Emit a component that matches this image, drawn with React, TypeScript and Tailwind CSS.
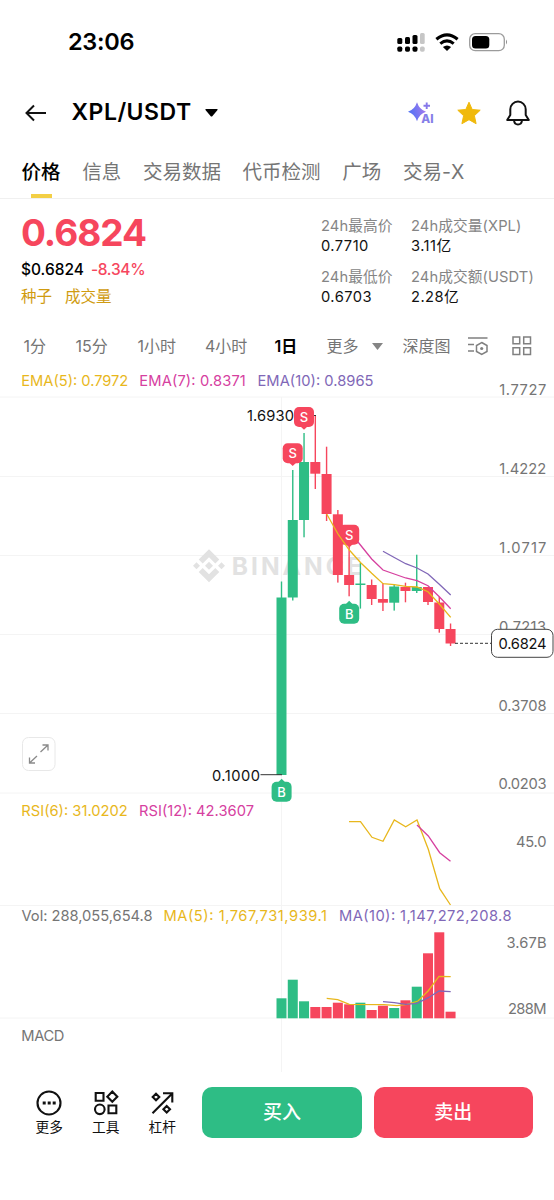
import type { ReactNode } from "react";

const GREEN = "#2ebd85";
const RED = "#f6465d";
const YELLOW = "#e8b71c";
const PINK = "#d6409f";
const PURPLE = "#8067b7";

const tabs = ["价格", "信息", "交易数据", "代币检测", "广场", "交易-X"];

// y: high, body top, body bottom, low. vol: top of the volume bar
const candles: { up: boolean; y: [number, number, number, number]; vol: number }[] = [
  { up: true, y: [581.5, 597.5, 775, 775], vol: 998.3 },
  { up: true, y: [470, 520, 597.5, 600.5], vol: 979.7 },
  { up: true, y: [433, 462, 520, 537.3], vol: 1001.3 },
  { up: false, y: [415, 462, 473.7, 489], vol: 1007 },
  { up: false, y: [446.7, 474, 514, 521], vol: 1007 },
  { up: false, y: [510, 514.3, 575, 582.6], vol: 1002.7 },
  { up: false, y: [547, 575, 585, 596.3], vol: 1004.3 },
  { up: true, y: [563, 583.5, 585, 608.6], vol: 1002.7 },
  { up: false, y: [579.5, 585, 599, 605], vol: 1010 },
  { up: false, y: [583, 599, 602.7, 611], vol: 1005.7 },
  { up: true, y: [585, 586.5, 602.7, 610.6], vol: 1008 },
  { up: false, y: [582.7, 587, 591, 602.3], vol: 1000.3 },
  { up: true, y: [554.7, 587, 591, 593], vol: 986.7 },
  { up: false, y: [587, 587, 602, 605], vol: 953.3 },
  { up: false, y: [597, 602.5, 629, 632.7], vol: 932.3 },
  { up: false, y: [623.5, 629, 643.5, 646], vol: 1011.7 },
];

const candleX = (i: number) => 281.5 + i * 11.27;

const lines = [
  { color: YELLOW, points: "326.7,514 338,534 349.3,550 360.7,562.7 371.7,573.3 383,583.7 394.3,584.7 405.7,586.3 417,587 428,591.7 439.3,604 450.7,617.3" },
  { color: PINK, points: "358,542 371.7,559 383,570 394.3,574 405.7,578 417,580.7 428,585.7 439.3,596.7 450.7,608.7" },
  { color: PURPLE, points: "383,551.3 394.3,557.5 405.7,563.7 417,568 428,574 439.3,584.3 450.7,595" },
  { color: YELLOW, points: "349,821.7 360.5,821.7 372,837.3 383,841.3 394.3,820 405.7,826.7 417,820 428.3,849.3 439.7,888.7 450.5,905" },
  { color: PINK, points: "417,825 428.3,836 439.7,852.7 450.5,861.3" },
  { color: YELLOW, points: "326.7,998.3 337.7,999.7 349.3,1004.3 383.7,1004.7 397,1005.7 407,1004.3 418,1001 428.3,990.7 439,976.3 450.7,976.7" },
  { color: PURPLE, points: "383,1001.7 394.3,1002.7 405.7,1004.3 417,1003.3 428.3,997.7 439,991 450.7,991.7" },
];

// text, left, baseline, width, colour
const labels: [string, number, number, number, string][] = [
  ["EMA(5): 0.7972", 21.3, 386, 107, YELLOW],
  ["EMA(7): 0.8371", 139.3, 386, 106.5, PINK],
  ["EMA(10): 0.8965", 257.5, 386, 116, PURPLE],
  ["RSI(6): 31.0202", 21.3, 815.7, 106.5, YELLOW],
  ["RSI(12): 42.3607", 139, 815.7, 115, PINK],
  ["Vol: 288,055,654.8", 21.5, 921.3, 131, "#757575"],
  ["MA(5): 1,767,731,939.1", 163.5, 921.3, 163.5, YELLOW],
  ["MA(10): 1,147,272,208.8", 339, 921.3, 172.5, PURPLE],
  ["MACD", 21.3, 1041, 43, "#757575"],
  ["1.7727", 499.3, 395, 47, "#757575"],
  ["1.4222", 499.3, 474, 47, "#757575"],
  ["1.0717", 499.3, 553, 47, "#757575"],
  ["0.7213", 499, 632, 47, "#757575"],
  ["0.3708", 498.5, 711, 48, "#757575"],
  ["0.0203", 498.5, 789, 48, "#757575"],
  ["45.0", 516, 847.3, 30.5, "#757575"],
  ["3.67B", 506.5, 948.3, 40, "#757575"],
  ["288M", 508, 1014.3, 38.5, "#757575"],
  ["1.6930", 247, 420.7, 47, "#111"],
  ["0.1000", 212, 781, 48, "#111"],
];

function Marker({ x, y, type }: { x: number; y: number; type: "B" | "S" }) {
  const fill = type === "B" ? GREEN : RED;
  return (
    <g>
      <path fill={fill} d={type === "B" ? `M${x - 4} ${y - 9}L${x} ${y - 13}L${x + 4} ${y - 9}Z` : `M${x - 4} ${y + 9}L${x} ${y + 12.8}L${x + 4} ${y + 9}Z`} />
      <rect x={x - 10} y={y - 10} width="20" height="20" rx="5" fill={fill} />
      <text x={x} y={y + 5} textAnchor="middle" fontSize="13" fontWeight="500" fill="#fff">{type}</text>
    </g>
  );
}

function Chart() {
  return (
    <svg className="block h-[702px] w-full shrink-0" viewBox="0 370 554 702">
      {[397, 476.5, 555.5, 634.5, 713.5, 793, 905.5, 1018].map((y) => (
        <path key={y} d={`M0 ${y}H554`} stroke="#f4f4f4" />
      ))}
      <path d="M281.5 397V1072" stroke="#f4f4f4" />

      {/* watermark */}
      <g fill="#e2e2e2">
        <path d="M209 549.3L219.3 559.6L215.3 563.6L209 557.3L202.7 563.6L198.7 559.6Z" />
        <path d="M209 582.3L219.3 572L215.3 568L209 574.3L202.7 568L198.7 572Z" />
        <path d="M196.5 562.3L200 565.8L196.5 569.3L193 565.8ZM221.5 562.3L225 565.8L221.5 569.3L218 565.8ZM209 561.8L213 565.8L209 569.8L205 565.8Z" />
        <text x="231.7" y="574.7" fontSize="24.5" fontWeight="700" textLength="130">BINANCE</text>
      </g>

      {candles.map(({ up, y: [high, top, bottom, low], vol }, i) => (
        <g key={i} fill={up ? GREEN : RED}>
          <rect x={candleX(i) - 0.7} y={high} width="1.4" height={low - high} />
          <rect x={candleX(i) - 5} y={top} width="10" height={bottom - top} />
          <rect x={candleX(i) - 5} y={vol} width="10" height={1018.3 - vol} />
        </g>
      ))}

      <path d="M294 415.5H316M260.5 774.7H282" stroke="#333" />
      <Marker x={304} y={417} type="S" />
      <Marker x={292.7} y={453.3} type="S" />
      <Marker x={349.2} y={534.7} type="S" />
      <Marker x={349.2} y={613.7} type="B" />
      <Marker x={281.6} y={791.7} type="B" />

      {lines.map((l) => (
        <polyline key={l.points} points={l.points} fill="none" stroke={l.color} strokeWidth="1.3" />
      ))}

      {labels.map(([text, x, y, width, color]) => (
        <text key={text} x={x} y={y} textLength={width} fontSize="14.7" fill={color}>{text}</text>
      ))}

      <path d="M455 643.3H491" stroke="#333" strokeDasharray="3 2" />
      <rect x="491.5" y="629.3" width="61.5" height="28" rx="6" fill="#fff" stroke="#444" />
      <text x="498.5" y="649" textLength="48" fontSize="14.7" fill="#111">0.6824</text>

      {/* fullscreen */}
      <rect x="22.5" y="737.5" width="32.5" height="33" rx="6" fill="#fff" stroke="#e8e8e8" />
      <path d="M40.5 752L48 745M42.5 745H48V750.5M37 756L29.5 763M29.5 757.5V763H35" fill="none" stroke="#8a8a8a" strokeWidth="1.3" />
    </svg>
  );
}

function Stat({ label, value }: { label: string; value: ReactNode }) {
  return (
    <div className="whitespace-nowrap">
      <div className="h-5 text-[14.7px] leading-5 tracking-[0.1px] text-[#858585]">{label}</div>
      <div className="h-5 text-[14.7px] leading-5 tracking-[0.45px] text-[#111]">{value}</div>
    </div>
  );
}

function Tool({ label, children }: { label: string; children: ReactNode }) {
  return (
    <div className="flex w-[56.5px] flex-col items-center">
      <svg className="h-7 w-7" viewBox="0 0 28 28" fill="none" stroke="#111" strokeWidth="2.1">{children}</svg>
      <span className="text-[13.7px] leading-5 text-[#111]">{label}</span>
    </div>
  );
}

export default function App() {
  return (
    <div className="flex h-[1200px] w-[554px] flex-col overflow-hidden bg-white font-['Inter','Noto_Sans_CJK_SC',sans-serif] text-black">
      {/* status bar */}
      <div className="flex h-[83px] shrink-0 items-center pl-[68px]">
        <span className="w-[329px] text-[23.5px] leading-none font-semibold tracking-[-0.3px]">23:06</span>
        <svg className="h-5 w-[28px]" viewBox="397 31 28 20">
          <g fill="#000">
            <rect x="397.3" y="37" width="5" height="6" rx="1.5" />
            <rect x="405" y="36" width="5" height="7" rx="1.5" />
            <rect x="412.5" y="34" width="5" height="9" rx="1.5" />
            <rect x="397.3" y="45.5" width="5" height="5.3" rx="1.7" />
            <rect x="405" y="45.5" width="5" height="5.3" rx="1.7" />
            <rect x="412.5" y="45.5" width="5" height="5.3" rx="1.7" />
          </g>
          <g fill="#c6c6c6">
            <rect x="420" y="32" width="4.7" height="11" rx="1.5" />
            <rect x="420" y="45.5" width="4.7" height="5.3" rx="1.7" />
          </g>
        </svg>
        <svg className="ml-[10px] h-5 w-6" viewBox="435 31 24 20" fill="none" stroke="#000" strokeWidth="3.1">
          <path d="M436.4 38.2Q447 29.4 457.6 38.2" />
          <path d="M440.3 42.6Q447 37.2 453.7 42.6" />
          <path d="M447 50L442.9 46Q447 42.9 451.1 46Z" fill="#000" stroke="none" />
        </svg>
        <svg className="ml-[10px] h-5 w-10" viewBox="469 31 40 20">
          <rect x="469.7" y="32.7" width="34.6" height="17" rx="5.5" fill="none" stroke="#9b9b9b" strokeWidth="1.3" />
          <rect x="472" y="35" width="17.3" height="12.6" rx="3.5" />
          <path d="M506 38.5Q508 41 506 43.5Z" fill="#8b8b8b" />
        </svg>
      </div>

      {/* header */}
      <div className="flex h-[58px] shrink-0 items-center pt-px pl-[25px]">
        <svg className="h-[18px] w-[21px]" viewBox="0 0 21 18" fill="none" stroke="#111" strokeWidth="2">
          <path d="M21 9H2M9 1.5L1.5 9L9 16.5" />
        </svg>
        <span className="ml-[25.5px] w-[133.5px] text-[23px] leading-none font-semibold tracking-[0.5px]">XPL/USDT</span>
        <svg className="h-2 w-[13px]" viewBox="0 0 13 8"><path d="M1 0H12Q13 0 12.5 1L7.5 7Q6.5 8 5.5 7L.5 1Q0 0 1 0Z" /></svg>
        <svg className="ml-[187.5px] h-7 w-[30px]" viewBox="406 98 30 28">
          <defs>
            <linearGradient id="ai" x1="0" x2="1" y1="0.6" y2="0.3">
              <stop stopColor="#4b72f5" />
              <stop offset="1" stopColor="#a77bed" />
            </linearGradient>
          </defs>
          <path d="M417 101.3Q419.3 108.6 426 110.7Q419.3 112.8 417 120.2Q414.7 112.8 408 110.7Q414.7 108.6 417 101.3Z" fill="url(#ai)" />
          <path d="M426.7 101.5V108M423.5 104.7H430" stroke="#8678ea" strokeWidth="1.9" />
          <text x="421.3" y="122.3" fontSize="12" fontWeight="800" fill="#8580e8" textLength="12.3" lengthAdjust="spacingAndGlyphs">AI</text>
        </svg>
        <svg className="ml-5 h-6 w-[26px]" viewBox="0 0 26 24">
          <path d="M13 1.2L16.2 8.5L24.2 9.2L18.4 14.7L20.1 22.7L13 18.7L5.9 22.7L7.6 14.7L1.8 9.2L9.8 8.5Z" fill="#f0b90b" stroke="#f0b90b" strokeLinejoin="round" />
        </svg>
        <svg className="ml-6 h-[26px] w-6" viewBox="0 0 24 26" fill="none" stroke="#111" strokeWidth="2" strokeLinejoin="round">
          <path d="M1.2 20L4.3 15V9.3A7.7 7.7 0 0119.7 9.3V15L22.8 20Z" />
          <path d="M8 20.5Q8.5 24.5 12 24.5T16 20.5" />
        </svg>
      </div>

      {/* tabs */}
      <div className="flex h-[57.5px] shrink-0 items-end gap-[21.7px] border-b border-[#f0f0f0] pl-[21.5px] text-[19.5px] leading-[30px] whitespace-nowrap text-[#757575]">
        {tabs.map((tab, i) => (
          <div key={tab} className="flex flex-col items-center">
            <span className={i === 0 ? "font-medium text-black" : ""}>{tab}</span>
            <span className={i === 0 ? "mt-[6.5px] h-1 w-[21px] bg-[#f3cf45]" : "mt-[6.5px] h-1"} />
          </div>
        ))}
      </div>

      {/* price summary */}
      <div className="flex h-[125px] shrink-0 pt-4 pl-[21px]">
        <div className="w-[300px]">
          <div className="mt-[-1px] h-[38px] text-[37px] leading-[38px] font-bold tracking-[-1px] text-[#f6465d]">0.6824</div>
          <div className="mt-[6px] flex h-6 items-center gap-[7px] text-[15.5px] font-medium">
            <span>$0.6824</span>
            <span className="tracking-[-0.3px] text-[#f6465d]">-8.34%</span>
          </div>
          <div className="mt-[3px] flex h-6 items-center gap-[13px] text-[15.5px] text-[#d09b10]">
            <span>种子</span>
            <span>成交量</span>
          </div>
        </div>
        <div className="grid h-[102px] grid-cols-[90px_120px] grid-rows-[50.5px_50.5px] pt-[1.5px]">
          <Stat label="24h最高价" value="0.7710" />
          <Stat label="24h成交量(XPL)" value="3.11亿" />
          <Stat label="24h最低价" value="0.6703" />
          <Stat label="24h成交额(USDT)" value="2.28亿" />
        </div>
      </div>

      {/* intervals */}
      <div className="grid h-[46.5px] shrink-0 grid-cols-[52px_62px_67.5px_69.5px_52px_76px_65px_44px_20px] items-center pb-px pl-[23.5px] text-base whitespace-nowrap text-[#757575]">
        <span>1分</span>
        <span>15分</span>
        <span>1小时</span>
        <span>4小时</span>
        <span className="font-semibold text-black">1日</span>
        <span className="flex items-center gap-[13px]">
          更多
          <svg className="h-[7px] w-[11px]" viewBox="0 0 11 7"><path d="M0 0H11L5.5 7Z" fill="#858585" /></svg>
        </span>
        <span>深度图</span>
        <svg className="h-5 w-5" viewBox="0 0 20 20" fill="none" stroke="#808080" strokeWidth="1.5">
          <path d="M0 2H19.5M0 8.5H6M0 15H6M13.7 6.5L19 9.5V15.5L13.7 18.5L8.5 15.5V9.5Z" />
          <circle cx="13.7" cy="12.5" r="1.6" fill="#808080" stroke="none" />
        </svg>
        <svg className="h-5 w-5" viewBox="0 0 20 20" fill="none" stroke="#808080" strokeWidth="1.5">
          <path d="M1 1H7.7V7.7H1ZM11.7 1H18.5V7.7H11.7ZM1 11.7H7.7V18.5H1ZM11.7 11.7H18.5V18.5H11.7Z" />
        </svg>
      </div>

      <Chart />

      {/* bottom bar */}
      <div className="flex shrink-0 items-start pt-[15px] pl-[21px]">
        <div className="flex w-[181px] pt-0.5">
          <Tool label="更多">
            <circle cx="14" cy="14" r="11.5" />
            <path d="M7.7 14H10.7M12.7 14H15.7M17.7 14H20.7" strokeWidth="2.8" />
          </Tool>
          <Tool label="工具">
            <path d="M3.7 4H11.5V11.8H3.7ZM16.5 16.5H24.3V24.3H16.5ZM20.3 2.6L25.3 7.7L20.3 12.8L15.3 7.7Z" />
            <circle cx="7.8" cy="20.3" r="4.8" />
          </Tool>
          <Tool label="杠杆">
            <path d="M4.5 24.3L24 4.8M15 4.3H24.3V13.5M8 4.7L11.3 8L8 11.3L4.7 8ZM18.7 17L22 20.3L18.7 23.6L15.4 20.3Z" />
          </Tool>
        </div>
        <button className="h-[51px] w-40 rounded-[10px] bg-[#2ebd85] pt-0.5 text-[19px] font-medium text-white">买入</button>
        <button className="ml-[11.5px] h-[51px] w-[159.5px] rounded-[10px] bg-[#f6465d] pt-0.5 text-[19px] font-medium text-white">卖出</button>
      </div>
    </div>
  );
}
